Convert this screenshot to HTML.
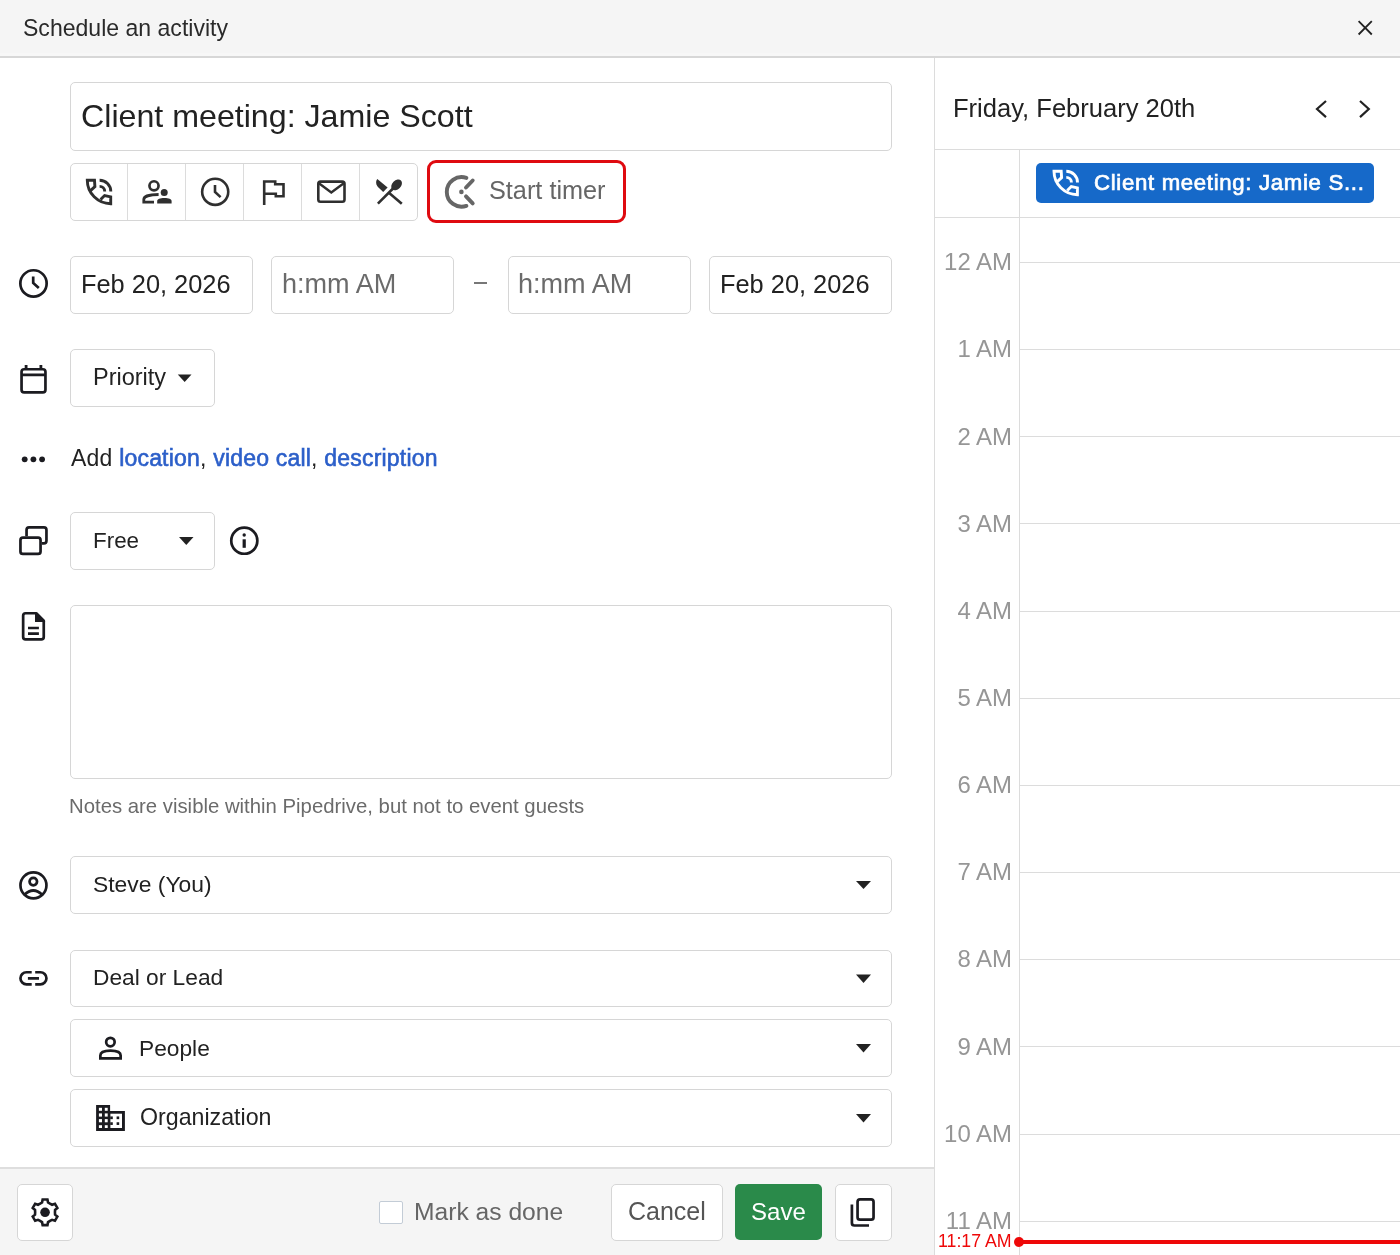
<!DOCTYPE html>
<html><head><meta charset="utf-8"><style>
html,body{margin:0;padding:0;}
body{width:1400px;height:1255px;position:relative;overflow:hidden;background:#fff;font-family:"Liberation Sans",sans-serif;}
.t{position:absolute;white-space:nowrap;will-change:transform;}
.b{position:absolute;box-sizing:border-box;}
.i{position:absolute;overflow:visible;}
.lk{color:#2c5fc9;font-weight:400;-webkit-text-stroke:0.6px #2c5fc9;}
</style></head><body>
<div class="b" style="left:0px;top:0px;width:1400px;height:56px;background:#f5f5f5;"></div>
<div class="b" style="left:0px;top:53px;width:1400px;height:3px;background:#f7f7f7;"></div>
<div class="b" style="left:0px;top:56px;width:1400px;height:2px;background:#d7d7d7;"></div>
<div class="t" style="left:23.00px;top:16.78px;font-size:23.06px;line-height:23.06px;color:#2a2a2a;">Schedule an activity</div>
<div class="b" style="left:934px;top:58px;width:1px;height:1197px;background:#dcdcdc;"></div>
<div class="t" style="left:953.20px;top:95.67px;font-size:25.55px;line-height:25.55px;color:#222;">Friday, February 20th</div>
<div class="b" style="left:935px;top:149px;width:465px;height:1px;background:#dcdcdc;"></div>
<div class="b" style="left:1019px;top:149px;width:1px;height:1106px;background:#dcdcdc;"></div>
<div class="b" style="left:935px;top:217px;width:465px;height:1px;background:#dcdcdc;"></div>
<div class="b" style="left:1036px;top:163px;width:338px;height:40px;background:#1669c9;border-radius:5px;"></div>
<div class="t" style="left:1094.40px;top:172.22px;font-size:22.19px;line-height:22.19px;color:#fff;-webkit-text-stroke:0.7px #fff;letter-spacing:0.68px;">Client meeting: Jamie S...</div>
<div class="b" style="left:1020px;top:262px;width:380px;height:1px;background:#dcdcdc;"></div>
<div class="t" style="left:812.00px;width:200px;text-align:right;top:250.22px;font-size:23.96px;line-height:23.96px;color:#969696;">12 AM</div>
<div class="b" style="left:1020px;top:349px;width:380px;height:1px;background:#dcdcdc;"></div>
<div class="t" style="left:812.00px;width:200px;text-align:right;top:337.37px;font-size:23.96px;line-height:23.96px;color:#969696;">1 AM</div>
<div class="b" style="left:1020px;top:436px;width:380px;height:1px;background:#dcdcdc;"></div>
<div class="t" style="left:812.00px;width:200px;text-align:right;top:424.52px;font-size:23.96px;line-height:23.96px;color:#969696;">2 AM</div>
<div class="b" style="left:1020px;top:523px;width:380px;height:1px;background:#dcdcdc;"></div>
<div class="t" style="left:812.00px;width:200px;text-align:right;top:511.67px;font-size:23.96px;line-height:23.96px;color:#969696;">3 AM</div>
<div class="b" style="left:1020px;top:611px;width:380px;height:1px;background:#dcdcdc;"></div>
<div class="t" style="left:812.00px;width:200px;text-align:right;top:598.82px;font-size:23.96px;line-height:23.96px;color:#969696;">4 AM</div>
<div class="b" style="left:1020px;top:698px;width:380px;height:1px;background:#dcdcdc;"></div>
<div class="t" style="left:812.00px;width:200px;text-align:right;top:685.97px;font-size:23.96px;line-height:23.96px;color:#969696;">5 AM</div>
<div class="b" style="left:1020px;top:785px;width:380px;height:1px;background:#dcdcdc;"></div>
<div class="t" style="left:812.00px;width:200px;text-align:right;top:773.12px;font-size:23.96px;line-height:23.96px;color:#969696;">6 AM</div>
<div class="b" style="left:1020px;top:872px;width:380px;height:1px;background:#dcdcdc;"></div>
<div class="t" style="left:812.00px;width:200px;text-align:right;top:860.27px;font-size:23.96px;line-height:23.96px;color:#969696;">7 AM</div>
<div class="b" style="left:1020px;top:959px;width:380px;height:1px;background:#dcdcdc;"></div>
<div class="t" style="left:812.00px;width:200px;text-align:right;top:947.42px;font-size:23.96px;line-height:23.96px;color:#969696;">8 AM</div>
<div class="b" style="left:1020px;top:1046px;width:380px;height:1px;background:#dcdcdc;"></div>
<div class="t" style="left:812.00px;width:200px;text-align:right;top:1034.57px;font-size:23.96px;line-height:23.96px;color:#969696;">9 AM</div>
<div class="b" style="left:1020px;top:1134px;width:380px;height:1px;background:#dcdcdc;"></div>
<div class="t" style="left:812.00px;width:200px;text-align:right;top:1121.72px;font-size:23.96px;line-height:23.96px;color:#969696;">10 AM</div>
<div class="b" style="left:1020px;top:1221px;width:380px;height:1px;background:#dcdcdc;"></div>
<div class="t" style="left:812.00px;width:200px;text-align:right;top:1208.87px;font-size:23.96px;line-height:23.96px;color:#969696;">11 AM</div>
<div class="b" style="left:1019px;top:1240px;width:381px;height:4px;background:#ee0808;"></div>
<div class="b" style="left:1014px;top:1237px;width:10px;height:10px;background:#ee0808;border-radius:50%;"></div>
<div class="t" style="left:937.90px;top:1232.78px;font-size:17.74px;line-height:17.74px;color:#ee0808;">11:17 AM</div>
<div class="b" style="left:70px;top:82px;width:822px;height:69px;border:1px solid #d6d6d6;border-radius:5px;background:#fff;"></div>
<div class="t" style="left:80.70px;top:100.25px;font-size:32.19px;line-height:32.19px;color:#222;">Client meeting: Jamie Scott</div>
<div class="b" style="left:70px;top:163px;width:348px;height:58px;border:1px solid #d6d6d6;border-radius:5px;background:#fff;"></div>
<div class="b" style="left:127px;top:164px;width:1px;height:56px;background:#dcdcdc;"></div>
<div class="b" style="left:185px;top:164px;width:1px;height:56px;background:#dcdcdc;"></div>
<div class="b" style="left:243px;top:164px;width:1px;height:56px;background:#dcdcdc;"></div>
<div class="b" style="left:301px;top:164px;width:1px;height:56px;background:#dcdcdc;"></div>
<div class="b" style="left:359px;top:164px;width:1px;height:56px;background:#dcdcdc;"></div>
<div class="b" style="left:427px;top:160px;width:199px;height:63px;border:3px solid #df0a10;border-radius:9px;background:#fff;"></div>
<div class="t" style="left:489.00px;top:178.31px;font-size:25.27px;line-height:25.27px;color:#666;">Start timer</div>
<div class="b" style="left:70px;top:256px;width:183px;height:58px;border:1px solid #d6d6d6;border-radius:5px;background:#fff;"></div>
<div class="b" style="left:271px;top:256px;width:183px;height:58px;border:1px solid #d6d6d6;border-radius:5px;background:#fff;"></div>
<div class="b" style="left:508px;top:256px;width:183px;height:58px;border:1px solid #d6d6d6;border-radius:5px;background:#fff;"></div>
<div class="b" style="left:709px;top:256px;width:183px;height:58px;border:1px solid #d6d6d6;border-radius:5px;background:#fff;"></div>
<div class="t" style="left:80.80px;top:272.21px;font-size:25.39px;line-height:25.39px;color:#222;">Feb 20, 2026</div>
<div class="t" style="left:281.80px;top:270.79px;font-size:27.06px;line-height:27.06px;color:#6b6b6b;">h:mm AM</div>
<div class="t" style="left:518.40px;top:270.79px;font-size:27.06px;line-height:27.06px;color:#6b6b6b;">h:mm AM</div>
<div class="t" style="left:719.60px;top:272.21px;font-size:25.39px;line-height:25.39px;color:#222;">Feb 20, 2026</div>
<div class="b" style="left:474px;top:282px;width:13px;height:2px;background:#777;"></div>
<div class="b" style="left:70px;top:349px;width:145px;height:58px;border:1px solid #d6d6d6;border-radius:5px;background:#fff;"></div>
<div class="t" style="left:92.50px;top:365.71px;font-size:23.5px;line-height:23.5px;color:#222;">Priority</div>
<div class="t" id="addrow" style="left:71px;top:447.03px;font-size:23px;line-height:23px;color:#222;letter-spacing:0.2px;">Add <b class="lk">location</b>, <b class="lk">video call</b>, <b class="lk">description</b></div>
<div class="b" style="left:70px;top:512px;width:145px;height:58px;border:1px solid #d6d6d6;border-radius:5px;background:#fff;"></div>
<div class="t" style="left:92.70px;top:529.74px;font-size:22.4px;line-height:22.4px;color:#222;">Free</div>
<div class="b" style="left:70px;top:605px;width:822px;height:174px;border:1px solid #d6d6d6;border-radius:5px;background:#fff;"></div>
<div class="t" style="left:68.90px;top:796.29px;font-size:20.33px;line-height:20.33px;color:#6b6b6b;">Notes are visible within Pipedrive, but not to event guests</div>
<div class="b" style="left:70px;top:856px;width:822px;height:58px;border:1px solid #d6d6d6;border-radius:5px;background:#fff;"></div>
<div class="t" style="left:93.00px;top:873.24px;font-size:22.87px;line-height:22.87px;color:#222;">Steve (You)</div>
<div class="b" style="left:70px;top:950px;width:822px;height:57px;border:1px solid #d6d6d6;border-radius:5px;background:#fff;"></div>
<div class="t" style="left:92.50px;top:966.35px;font-size:22.74px;line-height:22.74px;color:#222;">Deal or Lead</div>
<div class="b" style="left:70px;top:1019px;width:822px;height:58px;border:1px solid #d6d6d6;border-radius:5px;background:#fff;"></div>
<div class="t" style="left:138.90px;top:1036.55px;font-size:22.74px;line-height:22.74px;color:#222;">People</div>
<div class="b" style="left:70px;top:1089px;width:822px;height:58px;border:1px solid #d6d6d6;border-radius:5px;background:#fff;"></div>
<div class="t" style="left:139.90px;top:1106.07px;font-size:23.19px;line-height:23.19px;color:#222;">Organization</div>
<div class="b" style="left:0px;top:1167px;width:934px;height:88px;background:#f5f5f5;"></div>
<div class="b" style="left:0px;top:1167px;width:934px;height:2px;background:#dedede;"></div>
<div class="b" style="left:17px;top:1184px;width:56px;height:57px;border:1px solid #d6d6d6;border-radius:5px;background:#fff;"></div>
<div class="b" style="left:379px;top:1201px;width:24px;height:23px;border:1.5px solid #c3ccd6;border-radius:2px;background:#fff;box-sizing:border-box;"></div>
<div class="t" style="left:414.40px;top:1199.94px;font-size:24.64px;line-height:24.64px;color:#666;">Mark as done</div>
<div class="b" style="left:611px;top:1184px;width:112px;height:57px;border:1px solid #d6d6d6;border-radius:5px;background:#fff;"></div>
<div class="t" style="left:627.70px;top:1199.44px;font-size:25px;line-height:25px;color:#555;">Cancel</div>
<div class="b" style="left:735px;top:1184px;width:87px;height:56px;background:#2a8a4a;border-radius:5px;"></div>
<div class="t" style="left:751.30px;top:1200.25px;font-size:24.04px;line-height:24.04px;color:#fff;">Save</div>
<div class="b" style="left:835px;top:1184px;width:57px;height:57px;border:1px solid #d6d6d6;border-radius:5px;background:#fff;"></div>
<svg style="position:absolute;left:0;top:0" width="1400" height="1255" viewBox="0 0 1400 1255"><path d="M90.80,190.40 L94.90,186.60 L94.50,180.30 L87.30,180.30 A23.4,23.4 0 0 0 110.70,203.70 L110.70,196.80 L104.60,195.50 L100.60,199.60" fill="none" stroke="#2f2f2f" stroke-width="2.9" stroke-linejoin="miter"/><path d="M99.60,180.30 A11.2,11.2 0 0 1 110.80,191.50 M99.60,186.40 A5.1,5.1 0 0 1 104.70,191.50" fill="none" stroke="#2f2f2f" stroke-width="2.9"/><path d="M1057.50,181.40 L1061.60,177.60 L1061.20,171.30 L1054.00,171.30 A23.4,23.4 0 0 0 1077.40,194.70 L1077.40,187.80 L1071.30,186.50 L1067.30,190.60" fill="none" stroke="#fff" stroke-width="2.9" stroke-linejoin="miter"/><path d="M1066.30,171.30 A11.2,11.2 0 0 1 1077.50,182.50 M1066.30,177.40 A5.1,5.1 0 0 1 1071.40,182.50" fill="none" stroke="#fff" stroke-width="2.9"/><circle cx="154" cy="185.8" r="4.55" fill="none" stroke="#2f2f2f" stroke-width="2.7"/><path d="M158.6,194.5 C150,194.5 143.8,196.3 143.8,199.5 V202.2 H154" fill="none" stroke="#2f2f2f" stroke-width="2.8"/><circle cx="164.2" cy="192.5" r="3.5" fill="#2f2f2f"/><path d="M157.2,203.5 V201 C157.2,199 160,198 164.4,198 C168.8,198 171.6,199 171.6,201 V203.5 Z" fill="#2f2f2f"/><circle cx="215.2" cy="191.8" r="13.05" fill="none" stroke="#2f2f2f" stroke-width="2.6"/><path d="M215,185.1 V192 L220.6,197.1" fill="none" stroke="#2f2f2f" stroke-width="2.6"/><path d="M264.2,205 V181.5 H275.2 V184.3 H283.5 V196.3 H275.8 V193.7 H264.2" fill="none" stroke="#2f2f2f" stroke-width="2.6"/><rect x="318.3" y="181.6" width="26.2" height="20.2" rx="2.2" fill="none" stroke="#2f2f2f" stroke-width="2.6"/><path d="M318.6,183 L331.3,192.4 L344.1,183" fill="none" stroke="#2f2f2f" stroke-width="2.4"/><ellipse cx="396.6" cy="184.9" rx="6.2" ry="4.4" transform="rotate(-45 396.6 184.9)" fill="#2f2f2f"/><path d="M393,188.5 L377.9,203.6" stroke="#2f2f2f" stroke-width="2.6"/><path d="M377.3,179 C375.3,181.5 376,184.8 378.2,187.2 L383.2,192 L387.6,187.6 Z" fill="#2f2f2f"/><path d="M388.6,192.6 L401.8,203.8" stroke="#2f2f2f" stroke-width="2.6"/><path d="M466.4,177.9 A14.8,14.8 0 1 0 466.4,205.9" fill="none" stroke="#666" stroke-width="3.9" stroke-linecap="round"/><path d="M466,187.5 L472.7,180.5 M466,196.4 L472.7,203.4" stroke="#666" stroke-width="3.9" stroke-linecap="round"/><circle cx="461.4" cy="191.9" r="2.3" fill="#666"/><circle cx="33.5" cy="283.4" r="13.15" fill="none" stroke="#1b1b20" stroke-width="2.7"/><path d="M33.2,276.6 V283 L38.8,288.1" fill="none" stroke="#1b1b20" stroke-width="2.7"/><rect x="21.55" y="369.25" width="23.9" height="23.1" rx="2.6" fill="none" stroke="#1b1b20" stroke-width="2.7"/><path d="M21.5,374.9 H45.5 M26.1,364.9 V369.5 M40.9,364.9 V369.5" stroke="#1b1b20" stroke-width="2.8"/><circle cx="24.7" cy="459.3" r="2.9" fill="#1b1b20"/><circle cx="33.4" cy="459.3" r="2.9" fill="#1b1b20"/><circle cx="42.1" cy="459.3" r="2.9" fill="#1b1b20"/><path d="M26.55,536.3 V530 Q26.55,527.45 29.1,527.45 H43.9 Q46.45,527.45 46.45,530 V540.8 Q46.45,543.35 43.9,543.35 H41.9" fill="none" stroke="#1b1b20" stroke-width="2.7"/><rect x="20.45" y="537.65" width="20.1" height="16.3" rx="2.5" fill="none" stroke="#1b1b20" stroke-width="2.7"/><circle cx="244.3" cy="540.7" r="13.05" fill="none" stroke="#1b1b20" stroke-width="2.7"/><circle cx="244.2" cy="535" r="1.7" fill="#1b1b20"/><rect x="242.6" y="539.3" width="3.2" height="8.5" fill="#1b1b20"/><path d="M36.3,613.25 H25.6 Q23.15,613.25 23.15,615.7 V636.9 Q23.15,639.35 25.6,639.35 H41.3 Q43.75,639.35 43.75,636.9 V620.6 Z" fill="none" stroke="#1b1b20" stroke-width="2.7" stroke-linejoin="round"/><path d="M35,612 L45.1,621.3 L45.1,622 L35,622 Z" fill="#1b1b20"/><path d="M28,628 H38.9 M28,633.6 H38.9" stroke="#1b1b20" stroke-width="2.7"/><circle cx="33.45" cy="885.3" r="13.0" fill="none" stroke="#1b1b20" stroke-width="2.7"/><circle cx="33.3" cy="881.6" r="3.75" fill="none" stroke="#1b1b20" stroke-width="2.7"/><path d="M24.2,895 Q33.3,886 42.4,895" fill="none" stroke="#1b1b20" stroke-width="2.7"/><path d="M31.7,972.25 H26.5 A6.05,6.05 0 0 0 26.5,984.35 H31.7 M35.2,972.25 H40.4 A6.05,6.05 0 0 1 40.4,984.35 H35.2 M27.9,978.4 H39" fill="none" stroke="#1b1b20" stroke-width="2.7"/><circle cx="110.4" cy="1042.05" r="4.25" fill="none" stroke="#1b1b20" stroke-width="2.7"/><path d="M100.35,1058.45 V1055.5 C100.35,1052 105,1050.55 110.5,1050.55 C116,1050.55 120.65,1052 120.65,1055.5 V1058.45 Z" fill="none" stroke="#1b1b20" stroke-width="2.7"/><path d="M96.1,1105.1 H110.1 V1111 H124.9 V1130.9 H96.1 Z" fill="#1b1b20"/><rect x="98.9" y="1107.8" width="3.10" height="3.00" fill="#fff"/><rect x="98.9" y="1113.4" width="3.10" height="3.20" fill="#fff"/><rect x="98.9" y="1119.1" width="3.10" height="3.20" fill="#fff"/><rect x="98.9" y="1125.2" width="3.10" height="2.80" fill="#fff"/><rect x="104.8" y="1107.8" width="2.90" height="3.00" fill="#fff"/><rect x="104.8" y="1113.4" width="2.90" height="3.20" fill="#fff"/><rect x="104.8" y="1119.1" width="2.90" height="3.20" fill="#fff"/><rect x="104.8" y="1125.2" width="2.90" height="2.80" fill="#fff"/><rect x="110.4" y="1113.7" width="11.6" height="14.3" fill="#fff"/><rect x="110.2" y="1116.45" width="2.6" height="2.7" fill="#1b1b20"/><rect x="116.6" y="1116.45" width="2.6" height="2.7" fill="#1b1b20"/><rect x="110.2" y="1122.25" width="2.6" height="2.7" fill="#1b1b20"/><rect x="116.6" y="1122.25" width="2.6" height="2.7" fill="#1b1b20"/><path d="M42.05,1202.45 L42.65,1199.47 L47.45,1199.47 L48.05,1202.45 L50.00,1203.73 L52.08,1204.78 L54.96,1203.81 L57.36,1207.96 L55.08,1209.97 L54.95,1212.30 L55.08,1214.63 L57.36,1216.64 L54.96,1220.79 L52.08,1219.82 L50.00,1220.87 L48.05,1222.15 L47.45,1225.13 L42.65,1225.13 L42.05,1222.15 L40.10,1220.87 L38.02,1219.82 L35.14,1220.79 L32.74,1216.64 L35.02,1214.63 L35.15,1212.30 L35.02,1209.97 L32.74,1207.96 L35.14,1203.81 L38.02,1204.78 L40.10,1203.73 Z" fill="none" stroke="#1b1b20" stroke-width="2.6" stroke-linejoin="miter"/><circle cx="45.05" cy="1212.3" r="4.8" fill="#1b1b20"/><rect x="857.55" y="1199.45" width="16" height="20.2" rx="2.5" fill="none" stroke="#1b1b20" stroke-width="2.7"/><path d="M851.9,1204.4 V1223 Q851.9,1225.5 854.4,1225.5 H869" fill="none" stroke="#1b1b20" stroke-width="2.7"/><path d="M1358.6,21.2 L1371.8,34.5 M1371.8,21.2 L1358.6,34.5" stroke="#222" stroke-width="1.8"/><path d="M1326,101 L1317,109.05 L1326,117.1 M1360,101 L1368.8,109.05 L1360,117.1" fill="none" stroke="#222" stroke-width="2.2"/><path d="M177.8,374.6 H191.5 L184.65,382.1 Z" fill="#222"/><path d="M179,537.1 H193.5 L186.25,545.1 Z" fill="#222"/><path d="M856,881 H871 L863.5,889 Z" fill="#222"/><path d="M856,974.6 H871 L863.5,983 Z" fill="#222"/><path d="M856,1044 H871 L863.5,1052.5 Z" fill="#222"/><path d="M856,1114 H871 L863.5,1122.5 Z" fill="#222"/></svg>
</body></html>
